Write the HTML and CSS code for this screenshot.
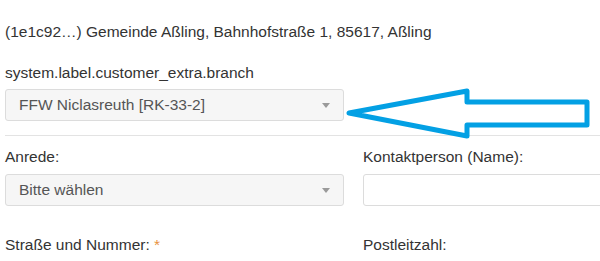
FILE: index.html
```html
<!DOCTYPE html>
<html lang="de">
<head>
<meta charset="utf-8">
<link rel="stylesheet" href="styles.css">
</head>
<body>
<div class="page">
  <div class="info">(1e1c92…) Gemeinde Aßling, Bahnhofstraße 1, 85617, Aßling</div>
  <div class="branch">
    <div class="label">system.label.customer_extra.branch</div>
    <div class="select"><span>FFW Niclasreuth [RK-33-2]</span><i class="caret"></i></div>
  </div>
  <div class="divider"></div>
  <div class="row">
    <div class="col">
      <div class="label">Anrede:</div>
      <div class="select"><span>Bitte wählen</span><i class="caret"></i></div>
    </div>
    <div class="col">
      <div class="label">Kontaktperson (Name):</div>
      <div class="input"></div>
    </div>
  </div>
  <div class="row row2">
    <div class="col"><div class="label">Straße und Nummer: <span class="req">*</span></div></div>
    <div class="col"><div class="label">Postleitzahl:</div></div>
  </div>
  <svg class="arrow" width="250" height="56" viewBox="0 0 250 56">
    <path d="M4 25 L122 3 L122 14 L242 14 L242 37 L122 37 L122 48 Z" fill="none" stroke="#03a0e4" stroke-width="5" stroke-linejoin="round"/>
  </svg>
</div>
</body>
</html>
```
FILE: styles.css
```css
html, body { margin: 0; padding: 0; background: #fff; }
body { font-family: "Liberation Sans", Arial, sans-serif; font-size: 15.5px; line-height: 20px; color: #333; overflow: hidden; }
.page { position: relative; padding: 22px 0 0 5px; width: 800px; }
.info { height: 20px; }
.branch { margin-top: 21px; width: 339px; }
.label { height: 20px; white-space: nowrap; }
.select { box-sizing: border-box; height: 32px; margin-top: 6px; border: 1px solid #dcdcdc; border-radius: 3px; background: #f6f6f6; color: #555; padding: 0 13px; display: flex; align-items: center; justify-content: space-between; }
.caret { display: block; width: 0; height: 0; border-left: 4px solid transparent; border-right: 4px solid transparent; border-top: 5px solid #9a9a9a; margin-right: 0; }
.divider { margin-top: 14px; border-top: 1px solid #e3e3e3; }
.row { display: flex; gap: 19px; margin-top: 11px; }
.col { width: 339px; flex: none; }
.row .select { margin-top: 7px; }
.input { box-sizing: border-box; height: 32px; margin-top: 7px; border: 1px solid #dcdcdc; border-radius: 3px; background: #fff; }
.row2 { margin-top: 29px; }
.req { color: #e8923e; }
.arrow { position: absolute; left: 345px; top: 88px; }
```
